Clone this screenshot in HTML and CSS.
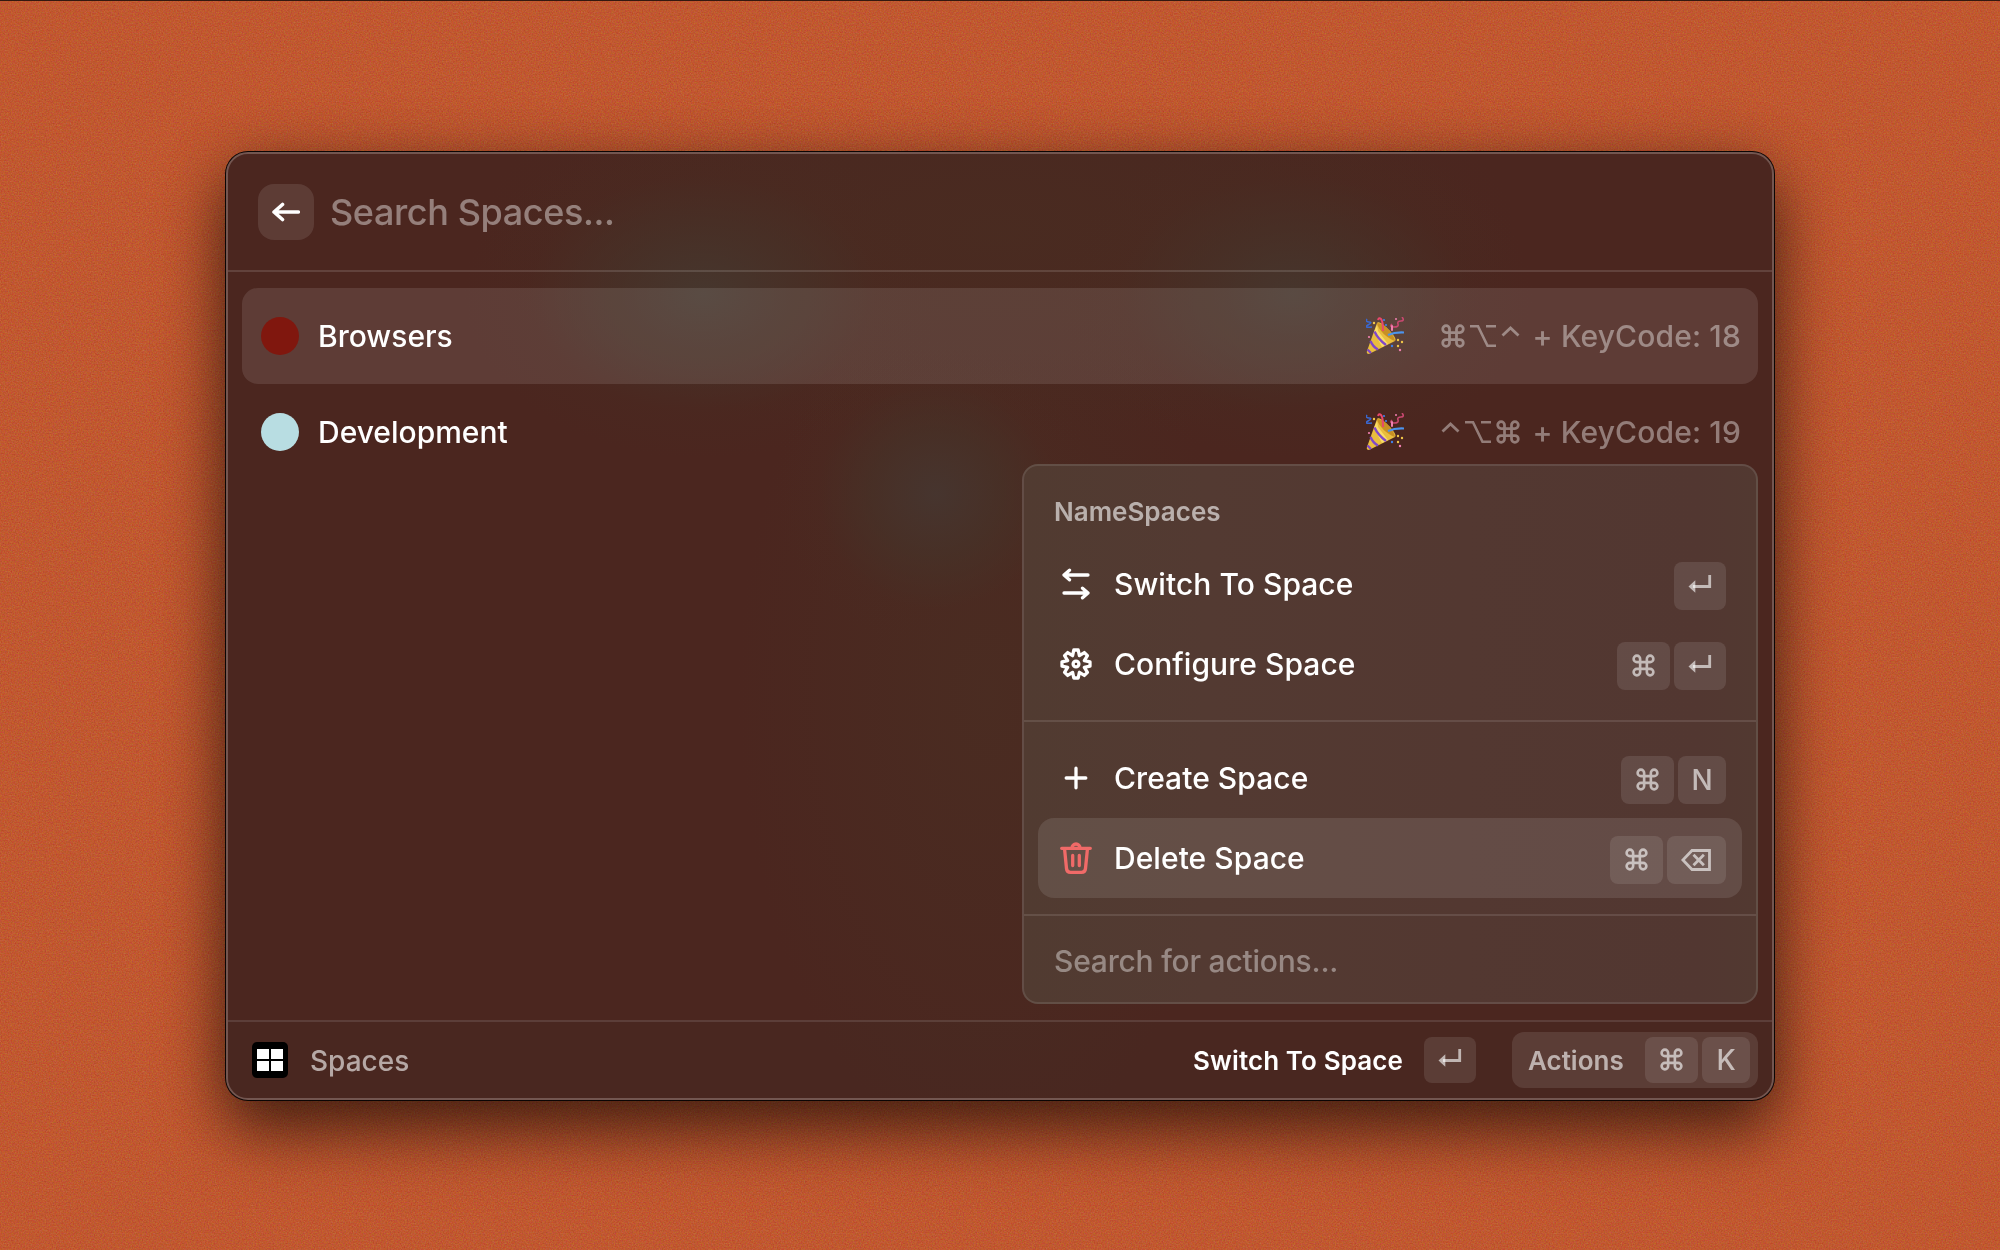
FILE: index.html
```html
<!DOCTYPE html>
<html lang="en">
<head>
<meta charset="utf-8">
<title>Spaces</title>
<link rel="stylesheet" href="styles.css">
</head>
<body>
<svg class="defs" aria-hidden="true">
  <symbol id="cmd" viewBox="0 0 24 24"><path d="M8.500 8.500h7v7h-7zM8.500 8.500V5.100a3.400 3.400 0 1 0-3.400 3.400zM15.500 8.500h3.400a3.400 3.400 0 1 0-3.400-3.400zM15.500 15.500v3.400a3.400 3.400 0 1 0 3.400-3.400zM8.500 15.500H5.100a3.400 3.400 0 1 0 3.400 3.400z" fill="none" stroke="currentColor" stroke-width="2.750"/></symbol>
  <symbol id="opt" viewBox="0 0 26 24"><path d="M0 2.300H8L17.500 21.700H26M16 2.300H26" fill="none" stroke="currentColor" stroke-width="2.600"/></symbol>
  <symbol id="ctrl" viewBox="0 0 18 24"><path d="M1 11.500 9 4l8 7.500" fill="none" stroke="currentColor" stroke-width="2.800"/></symbol>
  <symbol id="enter" viewBox="0 0 24 20"><path d="M21.700 1v11.500H5" fill="none" stroke="currentColor" stroke-width="2.800"/><path d="M.5 12.500 7.300 6.300v12.400z" fill="currentColor"/></symbol>
  <symbol id="party" viewBox="0 0 38 38">
    <path d="M11 6C12 4 17 7 22 12S31 22 29 24L3 37Q0 37 1 34Z" fill="#e9bd3e"/>
    <path d="M11 8 8 15 16 30 22 27 12 14Z" fill="#f8dc68"/>
    <path d="M8.500 14.500Q12 22 20 28M4.500 24Q7 30 12 32.500M1.500 32.500 5 36" fill="none" stroke="#8048c8" stroke-width="2.400"/>
    <path d="M11 6C18 6 28 17 29 24C22 22 12 13 11 6Z" fill="#c89024"/>
    <path d="M12 3Q13 0 15 2T17 14" fill="none" stroke="#e8486c" stroke-width="2"/>
    <path d="M22 18Q29 15 38 15.500" fill="none" stroke="#4c94ee" stroke-width="2.200"/>
    <path d="M1 2Q-1 5 3 5T2 8T6 10" fill="none" stroke="#3a68d0" stroke-width="1.500"/>
    <path d="M36 0Q39 4 35 4T32 7T28 10T26 7" fill="none" stroke="#c84870" stroke-width="1.600"/>
    <g fill="#f0c648"><circle cx="8" cy="6" r="1.200"/><circle cx="32" cy="23" r="1.200"/><circle cx="36" cy="25" r="1.200"/><circle cx="32" cy="29" r="1.200"/></g>
    <g fill="#4080e8"><circle cx="18" cy="3" r="1.100"/><circle cx="20" cy="8" r="1.100"/><circle cx="26" cy="29" r="1.200"/></g>
    <g fill="#f080b0"><circle cx="3" cy="20" r="1.100"/><circle cx="30" cy="2" r="1"/><circle cx="34" cy="33" r="1.200"/><rect x="25" y="8" width="2" height="6" rx="1"/></g>
  </symbol>
</svg>
<div class="desktop">
  <svg class="grain" aria-hidden="true"><filter id="noise" x="0" y="0" width="100%" height="100%" color-interpolation-filters="sRGB"><feTurbulence type="fractalNoise" baseFrequency="0.71" numOctaves="2" seed="4"/><feComponentTransfer><feFuncA type="linear" slope="0" intercept="1"/></feComponentTransfer></filter><rect width="100%" height="100%" filter="url(#noise)"/></svg>
  <main class="window">
    <header class="search">
      <button class="back" aria-label="Back"><svg width="28" height="20" viewBox="0 0 28 20"><path d="M26.300 10H2M10.500 2.500 2 10l8.500 7.500" fill="none" stroke="#fff" stroke-width="3.600" stroke-linecap="round" stroke-linejoin="round"/></svg></button>
      <span class="query">Search Spaces...</span>
    </header>
    <section class="list">
      <div class="row selected">
        <i class="dot red"></i><span class="name">Browsers</span>
        <svg class="party"><use href="#party"/></svg>
        <span class="shortcut"><svg class="g-cmd"><use href="#cmd"/></svg><svg class="g-opt"><use href="#opt"/></svg><svg class="g-ctrl"><use href="#ctrl"/></svg><span class="code">+ KeyCode: 18</span></span>
      </div>
      <div class="row">
        <i class="dot blue"></i><span class="name">Development</span>
        <svg class="party"><use href="#party"/></svg>
        <span class="shortcut"><svg class="g-ctrl"><use href="#ctrl"/></svg><svg class="g-opt"><use href="#opt"/></svg><svg class="g-cmd"><use href="#cmd"/></svg><span class="code">+ KeyCode: 19</span></span>
      </div>
    </section>
    <footer class="footer">
      <span class="app-icon"><i></i><i></i><i></i><i></i></span>
      <span class="app-name">Spaces</span>
      <span class="primary">Switch To Space</span>
      <kbd class="key w-enter"><svg class="k-enter"><use href="#enter"/></svg></kbd>
      <div class="actions"><span class="actions-label">Actions</span><kbd class="key w-cmd"><svg class="k-cmd"><use href="#cmd"/></svg></kbd><kbd class="key w-char">K</kbd></div>
    </footer>
    <aside class="menu">
      <div class="group">
        <h2 class="title">NameSpaces</h2>
        <div class="item"><svg class="icon" viewBox="0 0 32 32"><path d="M28 7H4M9.500 2.200 4 7l5.500 4.800M4 25H28M22.500 20.200 28 25l-5.500 4.800"/></svg><span class="label">Switch To Space</span><kbd class="key w-enter"><svg class="k-enter"><use href="#enter"/></svg></kbd></div>
        <div class="item"><svg class="icon" viewBox="0 0 32 32"><path d="M13.800 2h4.400l1.200 5.700 4.950-3.150 3.100 3.100-3.150 4.950L30 13.800v4.400l-5.700 1.200 3.150 4.950-3.100 3.100-4.950-3.150L18.200 30h-4.400l-1.200-5.700-4.950 3.150-3.100-3.100L7.700 19.400 2 18.200v-4.400l5.700-1.200-3.150-4.950 3.100-3.100L12.600 7.700z"/><circle cx="16" cy="16" r="2.900"/></svg><span class="label">Configure Space</span><kbd class="key w-cmd"><svg class="k-cmd"><use href="#cmd"/></svg></kbd><kbd class="key w-enter"><svg class="k-enter"><use href="#enter"/></svg></kbd></div>
      </div>
      <div class="group second">
        <div class="item"><svg class="icon" viewBox="0 0 32 32"><path d="M16 6.200v19.600M6.200 16h19.600"/></svg><span class="label">Create Space</span><kbd class="key w-cmd"><svg class="k-cmd"><use href="#cmd"/></svg></kbd><kbd class="key w-char">N</kbd></div>
        <div class="item active"><svg class="icon danger" viewBox="0 0 32 32"><path d="M1.700 6.300h28.600M4.500 6.300l2 20.200q.3 3.800 4 3.800h11q3.700 0 4-3.800l2-20.200M12 6a4 4 0 0 1 8 0M12.700 13.500v10M19.300 13.500v10"/></svg><span class="label">Delete Space</span><kbd class="key w-cmd"><svg class="k-cmd"><use href="#cmd"/></svg></kbd><kbd class="key w-del"><svg class="k-del" viewBox="0 0 30 22"><path d="M28.500 1.500H11L1.900 11 11 20.500h17.500zM12.500 5.800l10.400 10.400M22.900 5.800 12.500 16.200" fill="none" stroke="currentColor" stroke-width="2.800"/></svg></kbd></div>
      </div>
      <div class="filter">Search for actions...</div>
    </aside>
  </main>
</div>
</body>
</html>
```
FILE: styles.css
```css
* { box-sizing: border-box; }
body { margin: 0; font-family: Inter, "Liberation Sans", sans-serif; color: #fff; }
.defs { display: none; }
.desktop { position: relative; width: 2000px; height: 1250px; overflow: hidden; background: #c1582f; border-top: 1px solid #35180f; padding: 151px 226px 0; }
.grain { position: absolute; inset: 0; width: 100%; height: 100%; opacity: .5; mix-blend-mode: soft-light; }
.window {
  position: relative; width: 1548px; height: 948px; border: 2px solid #735650; border-radius: 22px;
  display: flex; flex-direction: column;
  background:
    radial-gradient(ellipse 240px 165px at 475px 140px, rgba(70,56,47,.9), rgba(70,52,42,.58) 40%, rgba(73,44,34,.25) 72%, transparent),
    radial-gradient(ellipse 240px 165px at 1065px 140px, rgba(70,56,47,.85), rgba(70,52,42,.52) 40%, rgba(73,44,34,.25) 72%, transparent),
    radial-gradient(ellipse 160px 155px at 708px 340px, rgba(70,54,48,.9), rgba(70,51,41,.6) 42%, rgba(74,43,34,.25) 74%, transparent),
    radial-gradient(ellipse 520px 210px at 770px 80px, rgba(73,44,33,.85), rgba(73,43,33,.5) 55%, transparent),
    radial-gradient(ellipse 250px 460px at 760px 540px, rgba(74,45,34,.85), rgba(74,43,33,.5) 60%, transparent),
    #4b261f;
  box-shadow: 0 0 0 1px #0b0504, 0 34px 64px rgba(0,0,0,.52), 0 8px 60px rgba(0,0,0,.28);
}
.search { height: 118px; flex: none; border-bottom: 2px solid rgba(255,255,255,.13); display: flex; align-items: center; padding: 0 30px; }
.back { width: 56px; height: 56px; border: 0; border-radius: 16px; padding: 0; background: rgba(255,255,255,.1); display: grid; place-items: center; }
.query { margin-left: 16px; font-size: 36px; line-height: 44px; font-weight: 450; letter-spacing: -.4px; color: rgba(255,255,255,.41); }
.list { flex: 1; padding: 16px 14px; }
.row { height: 96px; border-radius: 16px; display: flex; align-items: center; padding: 0 17px 0 19px; }
.selected { background: rgba(255,255,255,.105); }
.dot { width: 38px; height: 38px; border-radius: 50%; }
.red { background: #80170e; }
.blue { background: #b8dde2; }
.name { font-size: 30px; font-weight: 500; margin-left: 19px; flex: 1; }
.party { width: 38px; height: 38px; overflow: visible; margin-right: 37px; }
.shortcut { display: flex; align-items: center; width: 300px; color: rgba(255,255,255,.4); font-size: 30px; font-weight: 500; }
.shortcut svg { height: 24px; margin-right: 5px; flex: none; }
.g-cmd { width: 24px; }
.g-opt { width: 26px; }
.g-ctrl { width: 19px; }
.code { margin-left: auto; white-space: nowrap; letter-spacing: .15px; }
.footer { height: 78px; flex: none; border-top: 2px solid rgba(255,255,255,.11); background: rgba(68,46,36,.24); border-radius: 0 0 20px 20px; display: flex; align-items: center; padding: 0 14px 0 24px; }
.app-icon { width: 36px; height: 36px; border-radius: 5px; background: #000; display: grid; grid-template-columns: 12px 12px; grid-template-rows: 10px 10px; gap: 2px; place-content: center; }
.app-icon i { background: #fff; }
.app-name { font-size: 28px; font-weight: 500; color: rgba(255,255,255,.6); margin: 2px 0 0 22px; flex: 1; }
.primary { font-size: 26px; font-weight: 600; letter-spacing: .1px; margin-right: 21px; }
.key { flex: none; height: 48px; border-radius: 8px; background: rgba(255,255,255,.1); color: rgba(255,255,255,.62); display: grid; place-items: center; font: 500 28px Inter, sans-serif; }
.w-enter { width: 52px; }
.w-cmd { width: 53px; }
.w-char { width: 48px; }
.w-del { width: 59px; }
.k-enter { width: 24px; height: 20px; margin-top: -4px; }
.k-cmd { width: 23px; height: 23px; margin: -1px 1px 0 0; }
.k-del { width: 30px; height: 22px; margin: -1px 1px 0 0; }
.footer .key { height: 46px; }
.actions { margin-left: 36px; width: 246px; height: 56px; border-radius: 12px; background: rgba(255,255,255,.1); display: flex; align-items: center; padding: 0 8px 0 16px; gap: 4px; }
.actions-label { flex: 1; font-size: 26px; font-weight: 600; color: rgba(255,255,255,.6); }
.menu { position: absolute; right: 14px; bottom: 94px; width: 736px; height: 540px; border: 2px solid rgba(255,255,255,.1); border-radius: 16px; background: linear-gradient(90deg, #513b31, #533a32 25%, #533831 60%, #523731 92%, #523931); display: flex; flex-direction: column; }
.group { height: 256px; flex: none; border-bottom: 2px solid rgba(255,255,255,.11); padding: 0 14px; }
.second { height: 194px; padding-top: 16px; }
.title { margin: 0; height: 78px; padding: 30px 0 0 16px; font-size: 26px; line-height: 32px; font-weight: 600; color: rgba(255,255,255,.6); }
.item { height: 80px; border-radius: 16px; display: flex; align-items: center; padding: 0 16px 0 22px; gap: 4px; }
.item .key { margin-top: 4px; }
.active { background: rgba(255,255,255,.1); }
.icon { width: 32px; height: 32px; fill: none; stroke: #fff; stroke-width: 3.300; stroke-linecap: round; stroke-linejoin: round; }
.danger { stroke: #f06a68; }
.label { font-size: 30px; font-weight: 500; letter-spacing: .05px; margin-left: 18px; flex: 1; }
.filter { flex: 1; padding: 27px 0 0 30px; font-size: 30px; line-height: 36px; font-weight: 450; letter-spacing: -.22px; color: rgba(255,255,255,.4); }
```
